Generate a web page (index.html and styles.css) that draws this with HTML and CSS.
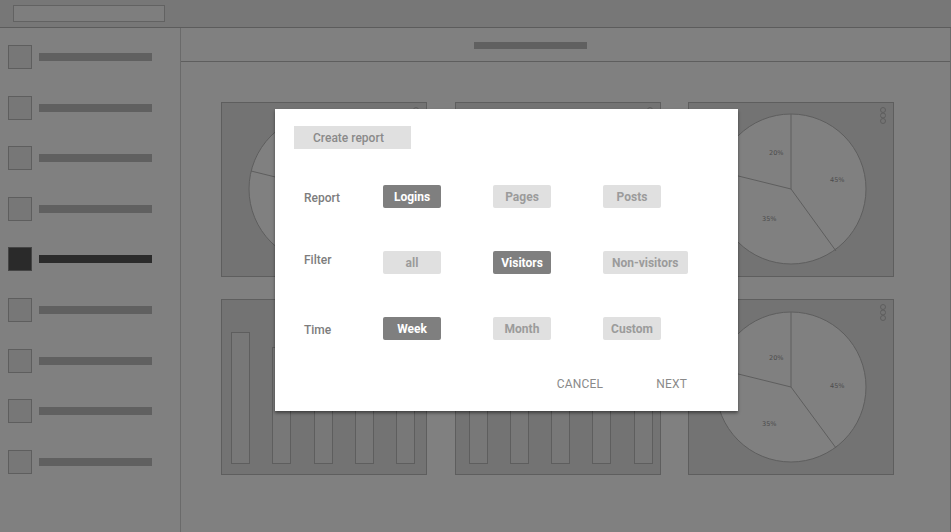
FILE: index.html
```html
<!DOCTYPE html>
<html>
<head>
<meta charset="utf-8">
<link rel="stylesheet" href="styles.css">
</head>
<body>
<div class="app">
  <header class="topbar"><div class="search"></div></header>
  <div class="body">
    <nav class="sidebar">
      <div class="nav-item"><span class="nav-sq"></span><span class="nav-bar"></span></div>
      <div class="nav-item"><span class="nav-sq"></span><span class="nav-bar"></span></div>
      <div class="nav-item"><span class="nav-sq"></span><span class="nav-bar"></span></div>
      <div class="nav-item"><span class="nav-sq"></span><span class="nav-bar"></span></div>
      <div class="nav-item active"><span class="nav-sq"></span><span class="nav-bar"></span></div>
      <div class="nav-item"><span class="nav-sq"></span><span class="nav-bar"></span></div>
      <div class="nav-item"><span class="nav-sq"></span><span class="nav-bar"></span></div>
      <div class="nav-item"><span class="nav-sq"></span><span class="nav-bar"></span></div>
      <div class="nav-item"><span class="nav-sq"></span><span class="nav-bar"></span></div>
    </nav>
    <main class="main">
      <div class="main-header"><span class="title-bar"></span></div>
      <div class="cards">
        <div class="card">
          <svg class="pie" viewBox="1 1 204 173" width="204" height="173">
            <circle cx="103" cy="87" r="75" class="pie-fill"/>
            <line x1="103" y1="87" x2="103" y2="12" class="pie-line"/>
            <line x1="103" y1="87" x2="148" y2="149" class="pie-line"/>
            <line x1="103" y1="87" x2="30" y2="69" class="pie-line"/>
            <text x="81" y="53" class="pie-label">20%</text>
            <text x="142" y="80" class="pie-label">45%</text>
            <text x="74" y="119" class="pie-label">35%</text>
          </svg>
          <svg class="dots" viewBox="0 0 8 18" width="8" height="18"><circle cx="4" cy="3" r="2.5"/><circle cx="4" cy="8.5" r="2.5"/><circle cx="4" cy="14" r="2.5"/></svg>
        </div>
        <div class="card">
          <svg class="pie" viewBox="1 1 204 173" width="204" height="173">
            <circle cx="103" cy="87" r="75" class="pie-fill"/>
            <line x1="103" y1="87" x2="103" y2="12" class="pie-line"/>
            <line x1="103" y1="87" x2="148" y2="149" class="pie-line"/>
            <line x1="103" y1="87" x2="30" y2="69" class="pie-line"/>
          </svg>
          <svg class="dots" viewBox="0 0 8 18" width="8" height="18"><circle cx="4" cy="3" r="2.5"/><circle cx="4" cy="8.5" r="2.5"/><circle cx="4" cy="14" r="2.5"/></svg>
        </div>
        <div class="card">
          <svg class="pie" viewBox="1 1 204 173" width="204" height="173">
            <circle cx="103" cy="87" r="75" class="pie-fill"/>
            <line x1="103" y1="87" x2="103" y2="12" class="pie-line"/>
            <line x1="103" y1="87" x2="148" y2="149" class="pie-line"/>
            <line x1="103" y1="87" x2="30" y2="69" class="pie-line"/>
            <text x="81" y="53" class="pie-label">20%</text>
            <text x="142" y="80" class="pie-label">45%</text>
            <text x="74" y="119" class="pie-label">35%</text>
          </svg>
          <svg class="dots" viewBox="0 0 8 18" width="8" height="18"><circle cx="4" cy="3" r="2.5"/><circle cx="4" cy="8.5" r="2.5"/><circle cx="4" cy="14" r="2.5"/></svg>
        </div>
        <div class="card bars bars-a">
          <span class="bar" style="height:132px"></span>
          <span class="bar" style="height:117px"></span>
          <span class="bar" style="height:96px"></span>
          <span class="bar" style="height:108px"></span>
          <span class="bar" style="height:84px"></span>
          <svg class="dots" viewBox="0 0 8 18" width="8" height="18"><circle cx="4" cy="3" r="2.5"/><circle cx="4" cy="8.5" r="2.5"/><circle cx="4" cy="14" r="2.5"/></svg>
        </div>
        <div class="card bars bars-b">
          <span class="bar" style="height:110px"></span>
          <span class="bar" style="height:90px"></span>
          <span class="bar" style="height:120px"></span>
          <span class="bar" style="height:100px"></span>
          <span class="bar" style="height:86px"></span>
          <svg class="dots" viewBox="0 0 8 18" width="8" height="18"><circle cx="4" cy="3" r="2.5"/><circle cx="4" cy="8.5" r="2.5"/><circle cx="4" cy="14" r="2.5"/></svg>
        </div>
        <div class="card">
          <svg class="pie" viewBox="1 1 204 174" width="204" height="174">
            <circle cx="103" cy="88" r="75" class="pie-fill"/>
            <line x1="103" y1="88" x2="103" y2="13" class="pie-line"/>
            <line x1="103" y1="88" x2="148" y2="149" class="pie-line"/>
            <line x1="103" y1="88" x2="30" y2="70" class="pie-line"/>
            <text x="81" y="61" class="pie-label">20%</text>
            <text x="142" y="89" class="pie-label">45%</text>
            <text x="74" y="127" class="pie-label">35%</text>
          </svg>
          <svg class="dots" viewBox="0 0 8 18" width="8" height="18"><circle cx="4" cy="3" r="2.5"/><circle cx="4" cy="8.5" r="2.5"/><circle cx="4" cy="14" r="2.5"/></svg>
        </div>
      </div>
    </main>
  </div>

  <div class="dialog">
    <div class="dialog-title">Create report</div>
    <div class="options">
      <span class="opt-label">Report</span>
      <span class="chip on">Logins</span>
      <span class="chip">Pages</span>
      <span class="chip">Posts</span>

      <span class="opt-label raised">Filter</span>
      <span class="chip">all</span>
      <span class="chip on">Visitors</span>
      <span class="chip wide">Non-visitors</span>

      <span class="opt-label">Time</span>
      <span class="chip on">Week</span>
      <span class="chip">Month</span>
      <span class="chip">Custom</span>
    </div>
    <div class="actions">
      <span class="action">CANCEL</span>
      <span class="action">NEXT</span>
    </div>
  </div>
</div>
</body>
</html>
```

FILE: styles.css
```css
* { box-sizing: border-box; }

html, body {
  margin: 0;
  padding: 0;
}

body {
  width: 951px;
  height: 532px;
  overflow: hidden;
  background: #808080;
  font-family: Roboto, "Liberation Sans", sans-serif;
}

.app {
  position: relative;
  width: 951px;
  height: 532px;
  display: flex;
  flex-direction: column;
}

/* top bar */
.topbar {
  height: 28px;
  flex: 0 0 28px;
  background: #777777;
  border-bottom: 1px solid #5c5c5c;
  padding: 5px 0 0 13px;
}

.search {
  width: 152px;
  height: 17px;
  border: 1px solid #626262;
  background: #7e7e7e;
}

.body {
  flex: 1;
  display: flex;
  border-right: 1px solid #6a6a6a;
}

/* sidebar */
.sidebar {
  width: 181px;
  flex: 0 0 181px;
  border-right: 1px solid #6a6a6a;
  padding: 17px 0 0 8px;
  display: flex;
  flex-direction: column;
  gap: 26.6px;
}

.nav-item {
  display: flex;
  align-items: center;
  gap: 7px;
  height: 24px;
}

.nav-sq {
  width: 24px;
  height: 24px;
  border: 1px solid #5e5e5e;
  background: #777777;
}

.nav-bar {
  width: 113px;
  height: 8px;
  background: #606060;
}

.nav-item.active .nav-sq {
  background: #2a2a2a;
  border-color: #454545;
}

.nav-item.active .nav-bar {
  background: #2b2b2b;
}

/* main */
.main {
  flex: 1;
  display: flex;
  flex-direction: column;
}

.main-header {
  height: 34px;
  flex: 0 0 34px;
  border-bottom: 1px solid #5e5e5e;
  padding: 14px 0 0 293px;
}

.title-bar {
  display: block;
  width: 113px;
  height: 7px;
  background: #606060;
}

.cards {
  padding: 40px 0 0 40px;
  display: grid;
  grid-template-columns: 206px 206px 206px;
  grid-template-rows: 175px 176px;
  column-gap: 27.5px;
  row-gap: 22px;
}

.card {
  position: relative;
  border: 1px solid #5e5e5e;
  background: #737373;
  overflow: hidden;
}

.pie {
  display: block;
}

.pie-fill {
  fill: #808080;
  stroke: #5e5e5e;
  stroke-width: 1;
}

.pie-line {
  stroke: #5e5e5e;
  stroke-width: 1;
}

.pie-label {
  font-family: "DejaVu Sans", sans-serif;
  font-size: 6.5px;
  fill: #4c4c4c;
}

.dots {
  position: absolute;
  top: 4px;
  right: 6px;
}

.dots circle {
  fill: none;
  stroke: #5e5e5e;
  stroke-width: 1;
}

.bars {
  display: flex;
  align-items: flex-end;
  padding-bottom: 10px;
  gap: 22.25px;
}

.bars-a { padding-left: 9px; }
.bars-b { padding-left: 13px; }

.bar {
  width: 19px;
  border: 1px solid #5e5e5e;
  background: #787878;
}

/* dialog */
.dialog {
  position: absolute;
  left: 275px;
  top: 109px;
  width: 463px;
  height: 302px;
  background: #ffffff;
  box-shadow: 0 2px 3px rgba(0, 0, 0, 0.45);
  padding: 17px 0 0 19px;
}

.dialog-title {
  width: 117px;
  height: 23px;
  line-height: 24px;
  padding-left: 19px;
  background: #e0e0e0;
  color: #8a8a8a;
  font-size: 12px;
  font-weight: 500;
}

.options {
  margin-top: 36px;
  display: grid;
  grid-template-columns: 89px 110px 110px auto;
  grid-auto-rows: 23px;
  row-gap: 43px;
  align-items: center;
  justify-items: start;
}

.opt-label {
  padding-left: 10px;
  padding-top: 2px;
  color: #7d7d7d;
  font-size: 12px;
  font-weight: 500;
}

.opt-label.raised {
  padding-top: 0;
  margin-bottom: 5px;
}

.chip {
  min-width: 58px;
  height: 23px;
  line-height: 24px;
  padding: 0 8px;
  text-align: center;
  border-radius: 2px;
  background: #e0e0e0;
  color: #9b9b9b;
  font-size: 12px;
  font-weight: 700;
}

.chip.wide {
  padding: 0 9px;
}

.chip.on {
  background: #7f7f7f;
  color: #ffffff;
}

.actions {
  margin-top: 37px;
  display: flex;
  justify-content: flex-end;
  gap: 53px;
  padding-right: 51px;
}

.action {
  font-size: 12px;
  line-height: 14px;
  color: #8a8a8a;
  letter-spacing: 0.2px;
}
```
